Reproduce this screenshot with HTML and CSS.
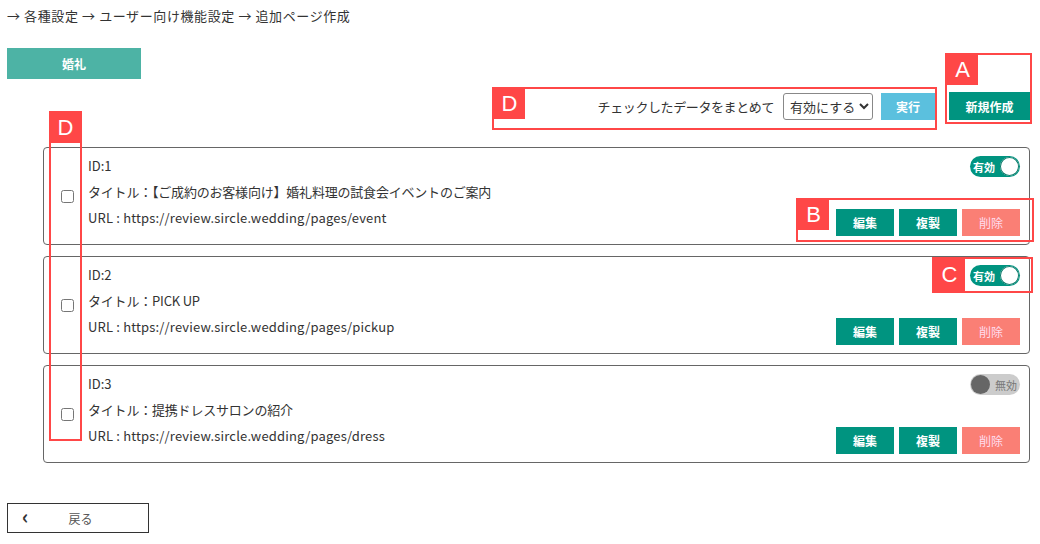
FILE: index.html
```html
<!DOCTYPE html>
<html lang="ja">
<head>
<meta charset="utf-8">
<link rel="stylesheet" href="styles.css">
</head>
<body>
<div class="page">
  <div class="breadcrumb">→ 各種設定 → ユーザー向け機能設定 → 追加ページ作成</div>
  <div class="tabs"><div class="tab">婚礼</div></div>
  <div class="toolbar">
    <span class="bulk-label">チェックしたデータをまとめて</span>
    <select class="bulk-select"><option>有効にする</option><option>無効にする</option></select>
    <button class="btn btn-run">実行</button>
    <button class="btn btn-new">新規作成</button>
  </div>
  <div class="list">
    <div class="card">
      <div class="check"><input type="checkbox"></div>
      <div class="info">
        <div class="line">ID:1</div>
        <div class="line title">タイトル：【ご成約のお客様向け】婚礼料理の試食会イベントのご案内</div>
        <div class="line url">URL : https://review.sircle.wedding/pages/event</div>
      </div>
      <div class="side">
        <div class="toggle on"><span class="tlabel">有効</span><span class="knob"></span></div>
        <div class="actions"><button class="btn btn-edit">編集</button><button class="btn btn-edit">複製</button><button class="btn btn-del">削除</button></div>
      </div>
    </div>
    <div class="card">
      <div class="check"><input type="checkbox"></div>
      <div class="info">
        <div class="line">ID:2</div>
        <div class="line title">タイトル：PICK UP</div>
        <div class="line url">URL : https://review.sircle.wedding/pages/pickup</div>
      </div>
      <div class="side">
        <div class="toggle on"><span class="tlabel">有効</span><span class="knob"></span></div>
        <div class="actions"><button class="btn btn-edit">編集</button><button class="btn btn-edit">複製</button><button class="btn btn-del">削除</button></div>
      </div>
    </div>
    <div class="card">
      <div class="check"><input type="checkbox"></div>
      <div class="info">
        <div class="line">ID:3</div>
        <div class="line title">タイトル：提携ドレスサロンの紹介</div>
        <div class="line url">URL : https://review.sircle.wedding/pages/dress</div>
      </div>
      <div class="side">
        <div class="toggle off"><span class="knob"></span><span class="tlabel">無効</span></div>
        <div class="actions"><button class="btn btn-edit">編集</button><button class="btn btn-edit">複製</button><button class="btn btn-del">削除</button></div>
      </div>
    </div>
  </div>
  <button class="back"><span class="chev">&#x2039;</span><span class="back-text">戻る</span></button>

  <div class="anno anno-a"><span class="tag">A</span></div>
  <div class="anno anno-d1"><span class="tag">D</span></div>
  <div class="anno anno-d2"><span class="tag">D</span></div>
  <div class="anno anno-b"><span class="tag">B</span></div>
  <div class="anno anno-c"><span class="tag tag-c">C</span></div>
</div>
</body>
</html>
```

FILE: styles.css
```css
* { box-sizing: border-box; }
html, body { margin: 0; padding: 0; background: #fff; }
body {
  font-family: "Noto Sans CJK JP", "Noto Sans", sans-serif;
  font-size: 13px;
  color: #333;
}
.page {
  position: relative;
  width: 1040px;
  height: 544px;
  padding: 6px 0 0 7px;
}
.breadcrumb {
  height: 20px;
  line-height: 20px;
  font-size: 13px;
  letter-spacing: 0.6px;
  color: #333;
}
.tabs { margin-top: 22px; display: flex; }
.tab {
  width: 134px;
  height: 31px;
  line-height: 31px;
  background: #4db3a5;
  color: #fff;
  text-align: center;
  font-size: 12px;
  font-weight: bold;
}
.toolbar {
  margin-top: 13px;
  margin-right: 10px;
  display: flex;
  justify-content: flex-end;
  align-items: center;
  height: 28px;
}
.bulk-label { font-size: 13px; margin-right: 9px; letter-spacing: -0.4px; color: #333; }
.bulk-select {
  width: 90px;
  height: 27px;
  font-family: "Noto Sans CJK JP", sans-serif;
  font-size: 13px;
  color: #333;
  border: 1px solid #888;
  border-radius: 3px;
  background: #fff;
  padding: 0 2px;
  margin-right: 8px;
}
.btn {
  border: none;
  font-family: "Noto Sans CJK JP", sans-serif;
  font-size: 12px;
  font-weight: bold;
  color: #fff;
  cursor: pointer;
  padding: 0;
}
.btn-run {
  width: 54px;
  height: 27px;
  background: #5bc0de;
  margin-right: 14px;
}
.btn-new {
  width: 81px;
  height: 28px;
  background: #009480;
}
.list {
  margin-top: 27px;
  margin-left: 36px;
  width: 987px;
  display: flex;
  flex-direction: column;
  gap: 11px;
}
.card {
  height: 98px;
  border: 1px solid #666;
  border-radius: 4px;
  display: grid;
  grid-template-columns: 44px 1fr auto;
  padding: 0 9px 0 0;
}
.check {
  display: flex;
  align-items: center;
  justify-content: center;
  padding-left: 2px;
}
.check input {
  width: 13px;
  height: 13px;
  margin: 0;
}
.info { padding-top: 5px; }
.line { line-height: 26px; height: 26px; font-size: 13px; color: #333; white-space: nowrap; }
.title { letter-spacing: -0.2px; }
.url { letter-spacing: 0.17px; }
.side {
  display: flex;
  flex-direction: column;
  justify-content: space-between;
  align-items: flex-end;
  padding: 8px 0 8px 0;
}
.toggle {
  width: 50px;
  height: 21px;
  border-radius: 11px;
  display: flex;
  align-items: center;
  font-size: 11px;
  font-weight: bold;
}
.toggle.on { background: #009480; color: #fff; padding: 0 1px 0 3px; justify-content: space-between; }
.toggle.off { background: #ccc; color: #777; padding: 0 3px 0 1px; justify-content: space-between; font-weight: normal; }
.knob {
  width: 19px;
  height: 19px;
  border-radius: 50%;
}
.toggle.on .knob { background: #fff; box-shadow: inset 0 0 0 1px #0a7a6a; }
.toggle.off .knob { background: #666; }
.actions { display: flex; gap: 5px; }
.btn-edit, .btn-del { width: 58px; height: 27px; }
.btn-edit { background: #009480; }
.btn-del { background: #fa7f75; font-weight: normal; color: #fde; }
.back {
  margin-top: 40px;
  width: 142px;
  height: 30px;
  border: 1px solid #333;
  background: #fff;
  display: flex;
  align-items: center;
  padding: 0 0 0 14px;
  font-family: "Noto Sans CJK JP", sans-serif;
  font-size: 12px;
  color: #555;
}
.chev { font-size: 20px; line-height: 20px; color: #333; font-weight: bold; margin-top: -4px; }
.back-text { margin-left: 40px; }

.anno {
  position: absolute;
  border: 2px solid #ff4747;
}
.tag {
  position: absolute;
  left: 0;
  top: 0;
  background: #ff4747;
  color: #fff;
  font-family: "Liberation Sans", sans-serif;
  font-size: 22px;
  line-height: 30px;
  text-align: center;
  width: 31px;
  height: 30px;
}
.anno-a { left: 945px; top: 53px; width: 87px; height: 71px; }
.anno-d1 { left: 492px; top: 87px; width: 445px; height: 43px; }
.anno-d2 { left: 49px; top: 111px; width: 33px; height: 330px; }
.anno-d2 .tag { width: 29px; }
.anno-b { left: 796px; top: 198px; width: 238px; height: 44px; }
.anno-c { left: 932px; top: 257px; width: 101px; height: 36px; }
.tag-c { height: 32px; line-height: 32px; }
```
